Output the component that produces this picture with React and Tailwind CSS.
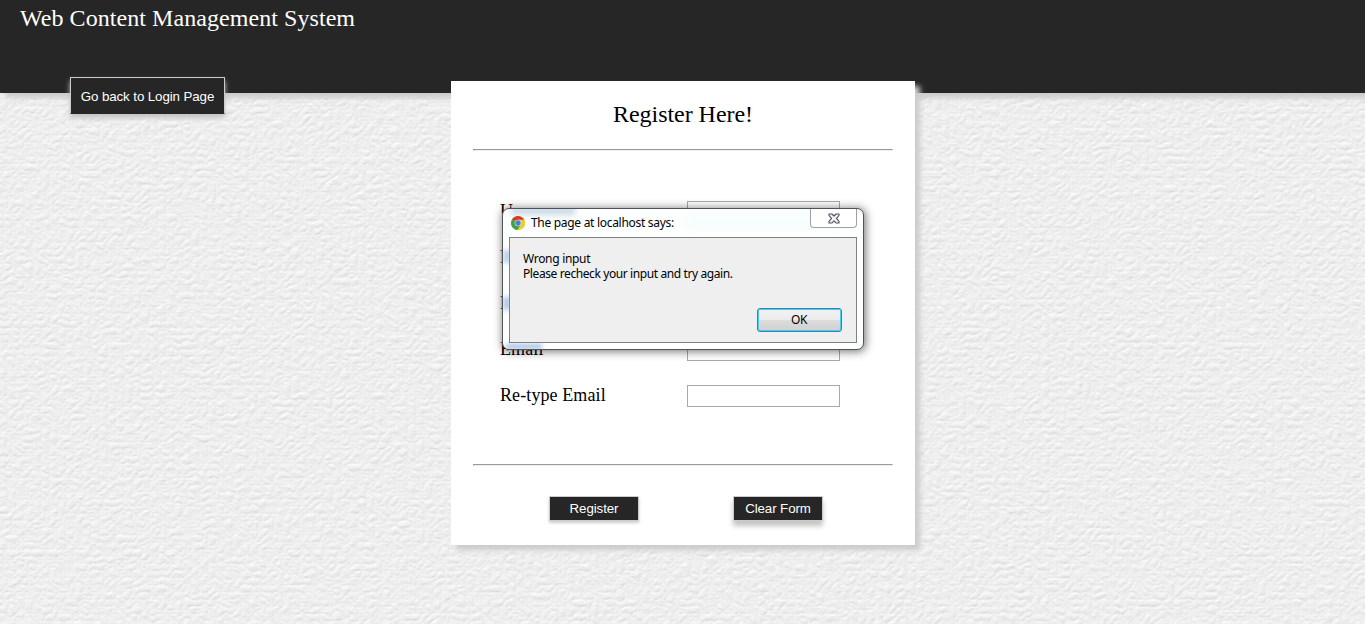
import React from "react";

const labels = ["Username", "Password", "Re-type Password", "Email", "Re-type Email"];

function PaperTexture() {
  return (
    <svg className="absolute inset-0 h-full w-full" aria-hidden="true">
      <filter id="paper" x="0" y="0" width="100%" height="100%" colorInterpolationFilters="sRGB">
        <feTurbulence type="turbulence" baseFrequency="0.12 0.14" numOctaves="3" seed="7" result="n" />
        <feDiffuseLighting in="n" surfaceScale="0.3" diffuseConstant="1.03" lightingColor="#ffffff">
          <feDistantLight azimuth="250" elevation="65" />
        </feDiffuseLighting>
      </filter>
      <rect width="100%" height="100%" filter="url(#paper)" />
    </svg>
  );
}

function ChromeLogo() {
  return (
    <svg className="h-[14px] w-[14px]" viewBox="0 0 28 28">
      <circle cx="14" cy="14" r="14" fill="#f4c92f" />
      <path d="M14 14 L1.9 7 A14 14 0 0 1 26.1 7 Z" fill="#d8392b" />
      <path d="M14 14 L1.9 7 A14 14 0 0 0 13 28 L20 17 Z" fill="#3fa24a" />
      <path d="M14 7.5 H26.4 A14 14 0 0 1 13 28 L20 17 Z" fill="#f4c92f" />
      <circle cx="14" cy="14" r="6.6" fill="#e6ecef" />
      <circle cx="14" cy="14" r="5.4" fill="#4a83c4" />
    </svg>
  );
}

function Rule() {
  return <div className="h-[2px] w-[420px] border border-b-[#eeeeee] border-l-[#9a9a9a] border-r-[#eeeeee] border-t-[#9a9a9a]" />;
}

function Dialog() {
  return (
    <div className="absolute left-[502px] top-[208px] flex h-[142px] w-[362px] flex-col overflow-visible rounded-[7px] border border-[#4f5256] bg-[#fdfefe] px-[6px] font-['Noto_Sans','Open_Sans',sans-serif] text-[12px] text-black shadow-[1px_1px_8px_1px_rgba(0,0,0,0.5)]">
      <div className="pointer-events-none absolute inset-0 overflow-hidden rounded-[6px]">
        <div className="absolute left-[8px] top-[-1px] h-[6px] w-[64px] bg-[#b9cde0] blur-[3px]" />
        <div className="absolute left-[0px] top-[41px] h-[13px] w-[8px] bg-[#bdd3ec] blur-[2px]" />
        <div className="absolute left-[0px] top-[88px] h-[13px] w-[8px] bg-[#b4cbe8] blur-[2px]" />
        <div className="absolute left-[3px] top-[135px] h-[5px] w-[36px] bg-[#a5c3e6] blur-[2px]" />
        <div className="absolute left-[185px] top-[7px] h-[10px] w-[150px] bg-[#f4fbfb] blur-[5px]" />
      </div>
      <div className="relative flex h-[28px] items-start">
        <div className="flex h-[28px] items-center gap-[6px] pl-[2px]">
          <ChromeLogo />
          <span className="whitespace-nowrap leading-[16px] tracking-[-0.3px]">The page at localhost says:</span>
        </div>
        <button className="ml-auto flex h-[19px] w-[47px] items-center justify-center rounded-b-[4px] border border-t-0 border-[#9da0a5] bg-white">
          <svg className="ml-px h-[11px] w-[12px]" viewBox="0 0 12 11">
            <path d="M1 1 H4 L6 3 L8 1 H11 V2.5 L8.5 5.4 L11 8.3 V10 H8 L6 7.8 L4 10 H1 V8.3 L3.5 5.4 L1 2.5 Z" fill="#f1f1f1" stroke="#4c5061" strokeWidth="1.1" strokeLinejoin="round" />
          </svg>
        </button>
      </div>
      <div className="relative flex h-[106px] w-[348px] flex-col border border-[#808080] bg-[#efefef] pl-[13px] pt-[13px]">
        <p className="whitespace-nowrap leading-[15px] tracking-[-0.3px]">Wrong input</p>
        <p className="whitespace-nowrap leading-[15px] tracking-[-0.4px]">Please recheck your input and try again.</p>
        <button className="ml-[234px] mt-[27px] flex h-[24px] w-[85px] items-center justify-center rounded-[3px] border border-[#3c7fb1] bg-[linear-gradient(#f2f2f2_0%,#ebebeb_48%,#dddddd_50%,#cfcfcf_100%)] pr-px leading-[14px] tracking-[-0.4px] shadow-[inset_0_0_0_1px_#46cff5]">
          OK
        </button>
      </div>
    </div>
  );
}

export default function App() {
  return (
    <div className="relative h-[624px] w-[1365px] overflow-hidden bg-[#eeeeee] font-['Liberation_Serif',serif] text-black">
      <PaperTexture />
      <header className="relative h-[93px] bg-[#262626] pl-[20px] pt-[4px] shadow-[5px_5px_5px_#cccccc]">
        <h1 className="text-[24px] leading-[28px] tracking-[0.06px] text-white">Web Content Management System</h1>
      </header>
      <div className="relative mt-[-16px] flex items-start pl-[70px]">
        <a className="flex h-[37px] w-[155px] items-center justify-center whitespace-nowrap border border-[#cccccc] border-b-[#262626] bg-[#262626] pt-[3px] font-['Liberation_Sans',sans-serif] text-[13.33px] tracking-[-0.1px] text-white shadow-[0_4px_5px_#c4c4c4]">
          Go back to Login Page
        </a>
        <main className="ml-[226px] mt-[4px] flex h-[464px] w-[464px] flex-col items-center bg-white shadow-[5px_5px_5px_#cccccc]">
          <h2 className="mt-[19px] text-[24px] leading-[28px] tracking-[-0.04px]">Register Here!</h2>
          <div className="mt-[21px]"><Rule /></div>
          <form className="mt-[50px] flex w-[366px] flex-col gap-[24px]">
            {labels.map((l) => (
              <div key={l} className="flex h-[22px] w-[340px] items-start justify-between">
                <label className="-mt-px text-[18px] leading-[22px] tracking-[0.1px]">{l}</label>
                <span className="h-[22px] w-[153px] border border-[#a9a9a9] bg-white" />
              </div>
            ))}
          </form>
          <div className="mt-[57px]"><Rule /></div>
          <div className="mt-[30px] flex gap-[94px] pl-[6px] font-['Liberation_Sans',sans-serif] text-[13.33px] tracking-[-0.1px] text-white">
            <button className="h-[25px] w-[90px] border border-[#cccccc] bg-[#262626] leading-[23px] shadow-[0_2px_3px_#cccccc]">Register</button>
            <button className="h-[25px] w-[90px] border border-[#cccccc] bg-[#262626] leading-[23px] shadow-[0_5px_5px_#c4c4c4]">Clear Form</button>
          </div>
        </main>
      </div>
      <Dialog />
    </div>
  );
}
